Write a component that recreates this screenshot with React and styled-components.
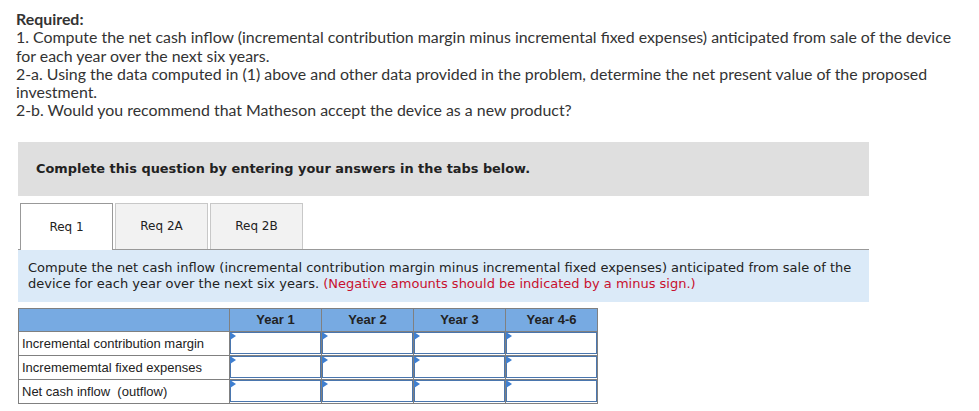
import React from 'react';
import styled, { createGlobalStyle } from 'styled-components';

const GlobalStyle = createGlobalStyle`
  body {
    margin: 0;
    background: #fff;
  }
`;

const Page = styled.div`
  padding: 10px 0 0 16px;
  width: 936px;
`;

const Required = styled.div`
  font-family: Lato, "Liberation Sans", sans-serif;
  font-size: 15.9px;
  line-height: 18.3px;
  color: #333;
`;

const Heading = styled.div`
  font-weight: 700;
`;

const Panel = styled.div`
  margin: 22px 0 0 2px;
  width: 851px;
`;

const Banner = styled.div`
  background: #dfdfdf;
  height: 54px;
  display: flex;
  align-items: center;
  padding-left: 18px;
  font-family: "DejaVu Sans", Verdana, sans-serif;
  font-weight: 700;
  font-size: 12.9px;
  color: #222;
`;

const TabRow = styled.div`
  display: flex;
  gap: 2px;
  margin-top: 7px;
  padding-left: 2px;
  border-bottom: 1px solid #999;
`;

const Tab = styled.div`
  width: 93px;
  box-sizing: border-box;
  display: flex;
  align-items: center;
  justify-content: center;
  font-family: "DejaVu Sans", Verdana, sans-serif;
  font-size: 12px;
  color: #222;
  background: ${p => (p.active ? '#fff' : '#f2f2f2')};
  border: 1px solid ${p => (p.active ? '#999' : '#c8c8c8')};
  border-bottom: none;
  margin-bottom: ${p => (p.active ? '-1px' : '0')};
  height: ${p => (p.active ? '47px' : '46px')};
`;

const Info = styled.div`
  background: #dbeaf8;
  padding: 10px;
  font-family: "DejaVu Sans", Verdana, sans-serif;
  font-size: 13px;
  line-height: 16px;
  color: #222;
`;

const Warn = styled.span`
  color: #c8102e;
`;

const Table = styled.table`
  margin-top: 6px;
  border-collapse: collapse;
  font-family: "Liberation Sans", Arial, sans-serif;
  font-size: 13px;
  color: #222;
`;

const HeadCell = styled.th`
  background: #77aae2;
  border: 1px solid #808080;
  height: 22px;
  padding: 0;
  width: ${p => p.w}px;
  font-weight: 700;
  text-align: center;
  color: #222;
`;

const LabelCell = styled.td`
  border: 1px solid #808080;
  height: 23px;
  padding: 0 0 0 3px;
  white-space: pre;
`;

const InputCell = styled.td`
  border: 1px solid #808080;
  padding: 0;
  height: 23px;
`;

const InputBox = styled.div`
  position: relative;
  height: 20px;
  border: 1.5px solid #4a76ae;
  background: #fff;
  &::before {
    content: '';
    position: absolute;
    left: -1px;
    top: -1px;
    border-left: 6px solid #3f7fd0;
    border-top: 4px solid transparent;
    border-bottom: 4px solid transparent;
  }
`;

const years = ['Year 1', 'Year 2', 'Year 3', 'Year 4-6'];
const rows = [
  'Incremental contribution margin',
  'Incremememtal fixed expenses',
  'Net cash inflow  (outflow)',
];

export default function App() {
  return (
    <Page>
      <GlobalStyle />
      <Required>
        <Heading>Required:</Heading>
        <div>
          1. Compute the net cash inflow (incremental contribution margin minus incremental fixed expenses) anticipated
          from sale of the device for each year over the next six years.
        </div>
        <div>
          2-a. Using the data computed in (1) above and other data provided in the problem, determine the net present
          value of the proposed investment.
        </div>
        <div>2-b. Would you recommend that Matheson accept the device as a new product?</div>
      </Required>

      <Panel>
        <Banner>Complete this question by entering your answers in the tabs below.</Banner>
        <TabRow>
          <Tab active>Req 1</Tab>
          <Tab>Req 2A</Tab>
          <Tab>Req 2B</Tab>
        </TabRow>
        <Info>
          Compute the net cash inflow (incremental contribution margin minus incremental fixed expenses) anticipated from
          sale of the device for each year over the next six years.{' '}
          <Warn>(Negative amounts should be indicated by a minus sign.)</Warn>
        </Info>
        <Table>
          <thead>
            <tr>
              <HeadCell w={210} />
              {years.map(y => (
                <HeadCell key={y} w={91}>
                  {y}
                </HeadCell>
              ))}
            </tr>
          </thead>
          <tbody>
            {rows.map(r => (
              <tr key={r}>
                <LabelCell>{r}</LabelCell>
                {years.map(y => (
                  <InputCell key={y}>
                    <InputBox />
                  </InputCell>
                ))}
              </tr>
            ))}
          </tbody>
        </Table>
      </Panel>
    </Page>
  );
}
